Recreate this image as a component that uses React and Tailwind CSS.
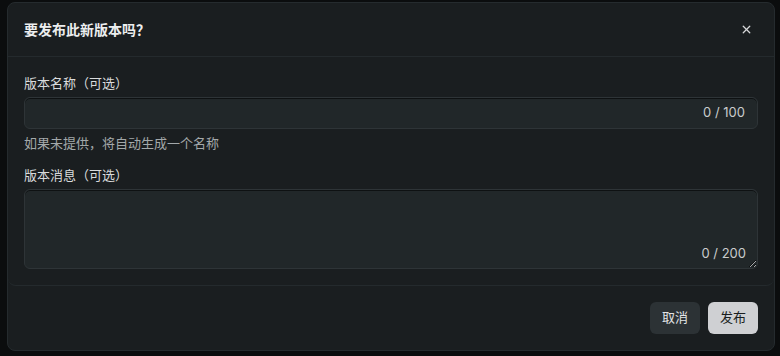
import React from "react";

export default function App() {
  return (
    <div
      className="w-[780px] h-[356px] bg-[#0b0d0e] overflow-hidden pl-[7px] pt-[2px]"
      style={{ fontFamily: 'Inter, "Noto Sans CJK SC", sans-serif' }}
    >
      <div className="w-[768px] h-[349px] rounded-[8px] border border-[#252b2e] bg-[#1a1e20] flex flex-col">
        <div className="h-[54px] shrink-0 flex items-center justify-between px-[16px] border-b border-[#242a2d]">
          <div className="text-[14px] font-bold text-[#eceeef]">要发布此新版本吗？</div>
          <button className="w-[20px] h-[20px] flex items-center justify-center text-[#d6d8d9] mr-[2px]">
            <svg width="13" height="13" viewBox="0 0 24 24" fill="none" stroke="currentColor" strokeWidth="2.4" strokeLinecap="round">
              <path d="M18 6 6 18" />
              <path d="m6 6 12 12" />
            </svg>
          </button>
        </div>
        <div className="px-[16px] pt-[16px] pb-[16px] border-b border-[#242a2d] rounded-b-[8px] flex flex-col">
          <label className="text-[13px] leading-[20px] text-[#d9dbdc]">版本名称（可选）</label>
          <div className="mt-[4px] h-[32px] rounded-[6px] border border-[#2e3437] bg-[#212729] shadow-[inset_0_1px_0_#0e1112] flex items-center pl-[12px] pr-[12px]">
            <input className="flex-1 bg-transparent outline-none text-[13px] text-[#d9dbdc]" />
            <span className="text-[13px] text-[#c9cccd]">0 / 100</span>
          </div>
          <div className="mt-[4px] text-[13px] leading-[20px] text-[#a3a8aa]">如果未提供，将自动生成一个名称</div>
          <label className="mt-[12px] text-[13px] leading-[20px] text-[#d9dbdc]">版本消息（可选）</label>
          <div className="mt-[4px] relative h-[80px]">
            <textarea className="w-full h-[80px] block rounded-[6px] border border-[#2e3437] bg-[#212729] shadow-[inset_0_1px_0_#0e1112] outline-none resize-y text-[13px] text-[#d9dbdc] p-[10px] [color-scheme:dark]" />
            <span className="absolute right-[12px] bottom-[6px] text-[13px] leading-[20px] text-[#c9cccd]">0 / 200</span>
          </div>
        </div>
        <div className="flex-1 flex items-start justify-end gap-[8px] px-[16px] pt-[16px]">
          <button className="h-[32px] px-[12px] rounded-[6px] bg-[#2c3235] text-[13px] text-[#e2e4e5]">取消</button>
          <button className="h-[32px] px-[12px] rounded-[6px] bg-[#cfd0d3] text-[13px] text-[#1a1e20]">发布</button>
        </div>
      </div>
    </div>
  );
}
